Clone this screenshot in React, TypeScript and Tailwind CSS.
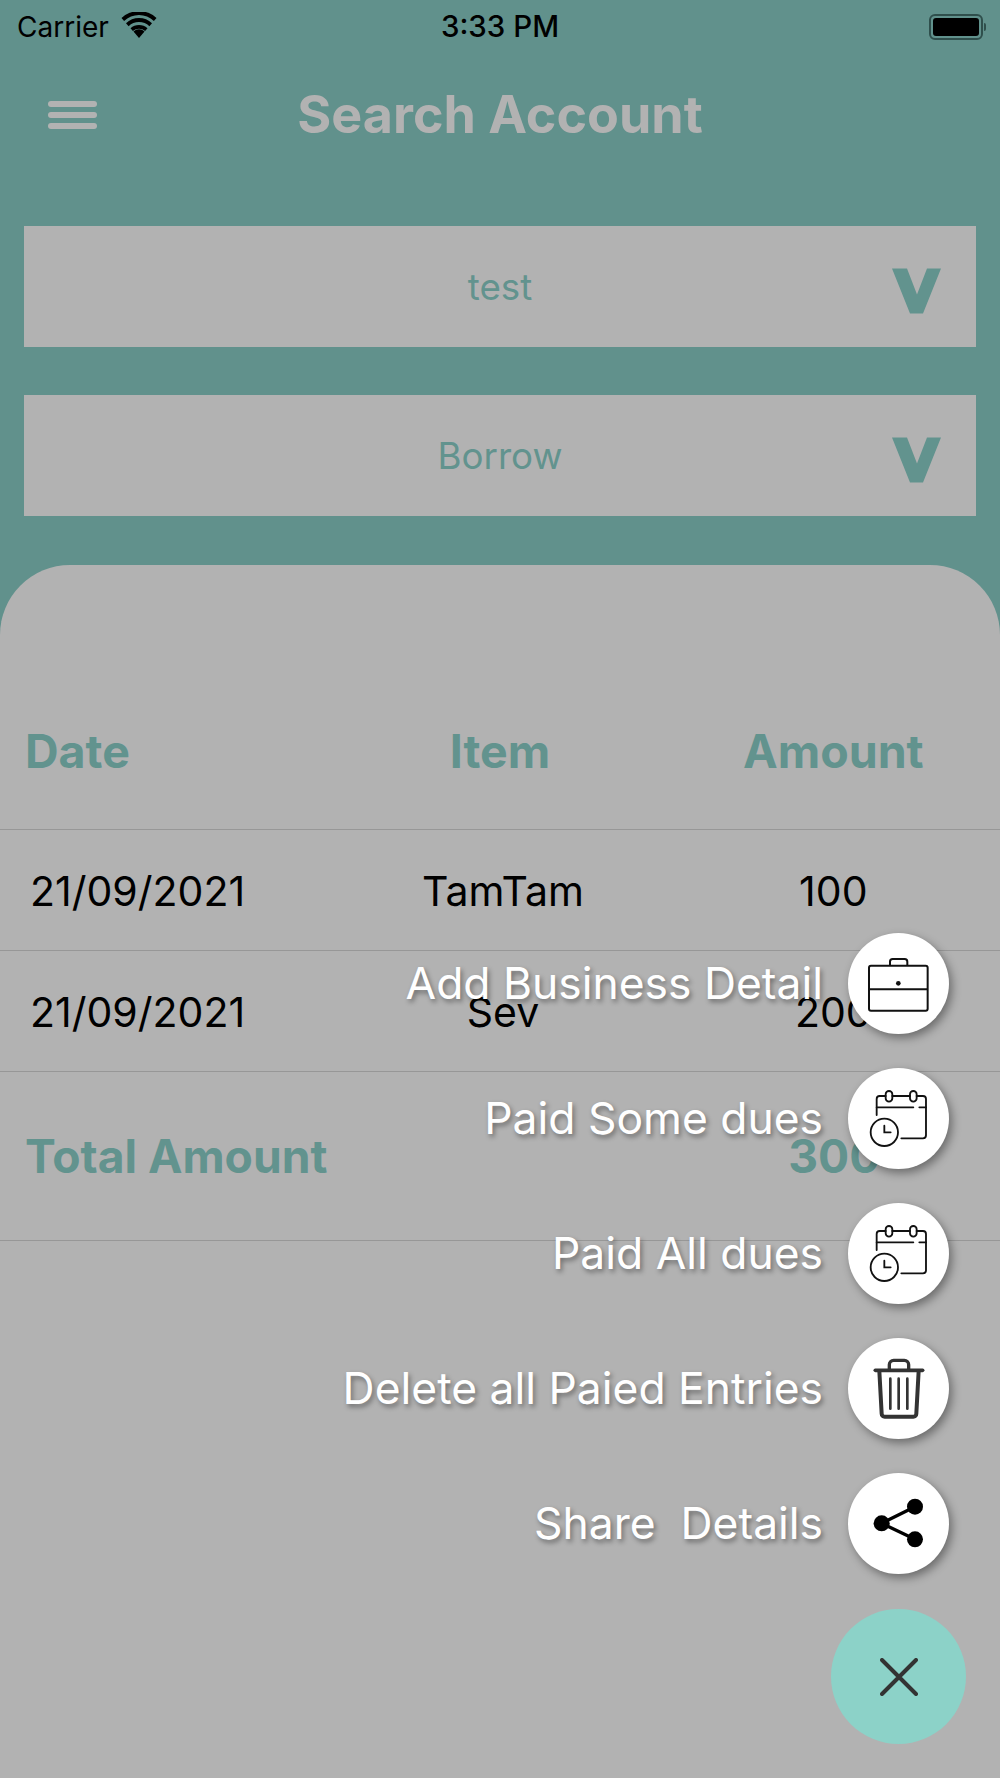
import React from "react";

const Chevron = () => (
  <svg width="50" height="47" viewBox="0 0 50 46" className="absolute right-[34px] top-[41px]">
    <polygon points="0,1 15,1 25,27 35,1 49,1 31,46 18,46" fill="#62938e" />
  </svg>
);

const Select = ({ label }: { label: string }) => (
  <div className="relative mx-6 flex h-[121px] items-center justify-center bg-[#b2b2b2]">
    <span className="text-[36.7px] text-[#62938e]">{label}</span>
    <Chevron />
  </div>
);

const Row = ({ a, b, c }: { a: string; b: string; c: string }) => (
  <div className="grid h-[121px] grid-cols-3 items-center border-b border-[#979797] pt-[3px] text-[41px] text-black">
    <span className="pl-[30px]">{a}</span>
    <span className="pl-[6px] text-center">{b}</span>
    <span className="text-center">{c}</span>
  </div>
);

const Briefcase = () => (
  <svg width="66.67" height="66.67" viewBox="135 85 200 200" fill="none" stroke="#111" strokeWidth="6">
    <rect x="147" y="132" width="176" height="135" rx="6" />
    <path d="M210 132v-12a8 8 0 0 1 8-8h36a8 8 0 0 1 8 8v12" />
    <path d="M147 203h176" />
    <circle cx="235" cy="185" r="7" fill="#111" stroke="none" />
  </svg>
);

const Calendar = () => (
  <svg width="66.67" height="66.67" viewBox="135 495 200 200" fill="none" stroke="#111" strokeWidth="5.5" strokeLinecap="round">
    <path d="M170 585v-48a9 9 0 0 1 9-9h18M217 528h53M290 528h19a9 9 0 0 1 9 9v109a9 9 0 0 1-9 9h-65" />
    <rect x="197" y="513" width="20" height="32" rx="10" />
    <rect x="270" y="513" width="20" height="32" rx="10" />
    <path d="M170 562h110M298 562h20" />
    <circle cx="193" cy="637" r="41" />
    <path d="M193 617v20h19" />
  </svg>
);

const Trash = () => (
  <svg width="66.67" height="66.67" viewBox="135 527 200 200" fill="none" stroke="#333" strokeLinecap="round" strokeLinejoin="round">
    <path d="M166 573h142" strokeWidth="11" />
    <path d="M208 571v-15a13 13 0 0 1 13-13h32a13 13 0 0 1 13 13v15" strokeWidth="10" />
    <path d="M178 575l7 128a9 9 0 0 0 9 9h86a9 9 0 0 0 9-9l7-128" strokeWidth="12" />
    <path d="M211 598v90M236 598v90M262 598v90" strokeWidth="8" />
  </svg>
);

const Share = () => (
  <svg width="66.67" height="66.67" viewBox="135 33 200 200" fill="#000" stroke="#000">
    <path d="M285 83L185 133L285 181" fill="none" strokeWidth="10" />
    <circle cx="185" cy="133" r="24" stroke="none" />
    <circle cx="285" cy="83" r="24" stroke="none" />
    <circle cx="285" cy="181" r="24" stroke="none" />
  </svg>
);

const items: { label: string; icon: React.ReactNode }[] = [
  { label: "Add Business Detail", icon: <Briefcase /> },
  { label: "Paid Some dues", icon: <Calendar /> },
  { label: "Paid All dues", icon: <Calendar /> },
  { label: "Delete all Paied Entries", icon: <Trash /> },
  { label: "Share  Details", icon: <Share /> },
];

export default function App() {
  return (
    <div className="relative h-[1778px] w-[1000px] overflow-hidden bg-[#61918c] font-['Inter',sans-serif]">
      {/* status bar */}
      <div className="relative flex h-[50px] items-center justify-between pl-[17px] pr-[14px] pt-1 text-black">
        <div className="flex items-center gap-[12px]">
          <span className="text-[28px] leading-none">Carrier</span>
          <svg width="36" height="26" viewBox="0 0 36 26" className="-mt-1">
            <path d="M18 26L12.5 19.5a8 8 0 0 1 11 0Z" />
            <path d="M9.5 16.3a12.5 12.5 0 0 1 17 0l-2.4 2.8a9 9 0 0 0-12.2 0Z" />
            <path d="M5 11.2a19 19 0 0 1 26 0l-2.6 3a15 15 0 0 0-20.8 0Z" />
            <path d="M0.5 6a25.5 25.5 0 0 1 35 0l-2.6 3a21.5 21.5 0 0 0-29.8 0Z" />
          </svg>
        </div>
        <span className="absolute left-0 right-0 text-center text-[29.5px] font-medium leading-none">3:33 PM</span>
        <div className="flex items-center">
          <div className="flex h-[26px] w-[54px] items-center justify-center rounded-[6px] border-2 border-[#2f4f4c]">
            <div className="h-[18px] w-[46px] rounded-[3px] bg-black" />
          </div>
          <div className="ml-px h-[8px] w-[2px] rounded-r bg-[#2f4f4c]" />
        </div>
      </div>

      {/* header */}
      <div className="relative mt-[29px] flex h-[72px] items-center justify-center">
        <div className="absolute left-12 flex w-[49px] flex-col gap-[5px]">
          <div className="h-[6px] rounded-sm bg-[#b2b2b2]" />
          <div className="h-[6px] rounded-sm bg-[#b2b2b2]" />
          <div className="h-[6px] rounded-sm bg-[#b2b2b2]" />
        </div>
        <h1 className="text-[52px] font-bold text-[#b2b2b2]">Search Account</h1>
      </div>

      <div className="mt-[75px] flex flex-col gap-12">
        <Select label="test" />
        <Select label="Borrow" />
      </div>

      {/* panel */}
      <div className="mt-[49px] h-[1213px] rounded-t-[70px] bg-[#b2b2b2]">
        <div className="grid h-[265px] grid-cols-3 items-end border-b border-[#979797] pb-[42px] text-[46.5px] font-bold text-[#62938e]">
          <span className="pl-[25px]">Date</span>
          <span className="text-center">Item</span>
          <span className="text-center">Amount</span>
        </div>
        <Row a="21/09/2021" b="TamTam" c="100" />
        <Row a="21/09/2021" b="Sev" c="200" />
        <div className="grid h-[169px] grid-cols-3 items-center border-b border-[#979797] pt-[2px] text-[46.2px] font-bold text-[#62938e]">
          <span className="col-span-2 pl-[25px]">Total Amount</span>
          <span className="pl-[2px] text-center">300</span>
        </div>
      </div>

      {/* floating action menu */}
      <div className="absolute right-[51px] top-[933px] flex flex-col items-end gap-[34px]">
        {items.map((it) => (
          <div key={it.label} className="flex h-[101px] items-center gap-[25px]">
            <span className="whitespace-pre text-[44.4px] text-white [text-shadow:2px_3px_5px_rgba(0,0,0,0.4)]">
              {it.label}
            </span>
            <div className="flex h-[101px] w-[101px] items-center justify-center rounded-full bg-white shadow-[3px_4px_10px_rgba(0,0,0,0.4)]">
              {it.icon}
            </div>
          </div>
        ))}
      </div>
      <div className="absolute left-[831px] top-[1609px] flex h-[135px] w-[135px] items-center justify-center rounded-full bg-[#8cd2c8]">
        <svg width="38" height="38" viewBox="0 0 38 38" stroke="#333" strokeWidth="4" strokeLinecap="round">
          <path d="M2 2L36 36M36 2L2 36" />
        </svg>
      </div>
    </div>
  );
}
